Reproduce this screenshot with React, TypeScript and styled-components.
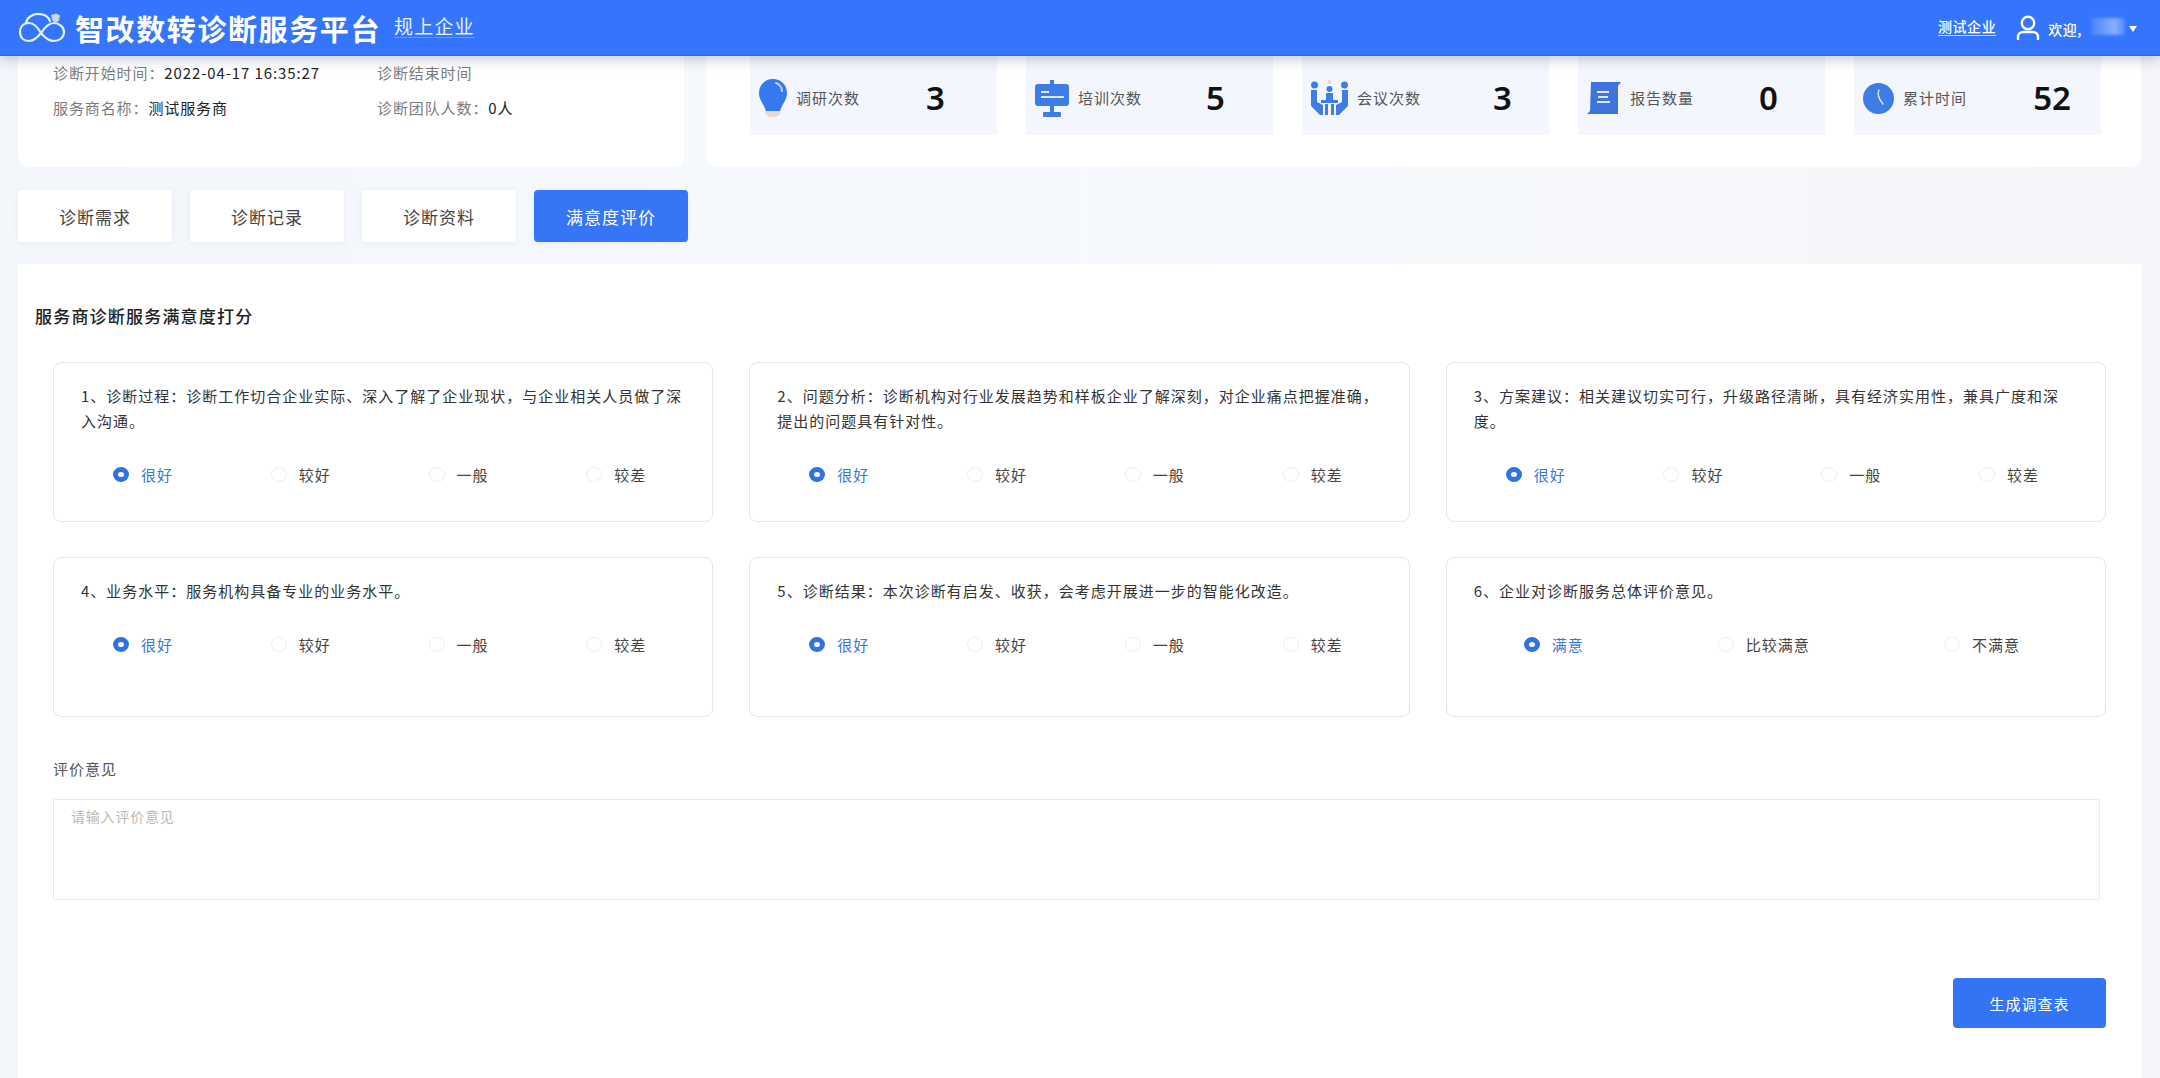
import React from "react";
import styled, { createGlobalStyle } from "styled-components";

const GlobalStyle = createGlobalStyle`
  html, body {
    margin: 0;
    padding: 0;
    background: #f6f9fd;
    font-family: "Noto Sans CJK SC", "Noto Sans", sans-serif;
    color: #333;
  }
  * {
    box-sizing: border-box;
  }
`;

const Page = styled.div`
  width: 2160px;
  height: 1078px;
  overflow: hidden;
  display: flex;
  flex-direction: column;
  background: linear-gradient(90deg, #f3f6fb 0%, #f6f9fd 50%, #f5f6f9 100%);
`;

const Header = styled.header`
  position: relative;
  z-index: 2;
  flex: none;
  height: 56px;
  display: flex;
  align-items: center;
  padding: 0 22px 0 18px;
  background: #3575fb;
  border-bottom: 1px solid #2f66d8;
  box-shadow: 0 3px 12px rgba(40, 50, 70, 0.28);
  color: #fff;
`;

const Brand = styled.h1`
  margin: 0 0 0 9px;
  font-size: 29px;
  line-height: 40px;
  letter-spacing: 1.6px;
  font-weight: 700;
`;

const Scope = styled.span`
  margin: -4px 0 0 13px;
  font-size: 19px;
  letter-spacing: 1.2px;
  color: #e3f0ff;
  text-decoration: underline;
  text-decoration-color: rgba(255, 255, 255, 0.25);
  text-underline-offset: 3px;
`;

const UserArea = styled.div`
  margin-left: auto;
  display: flex;
  align-items: center;
`;

const Company = styled.span`
  margin: -3px 20px 0 0;
  font-size: 14px;
  letter-spacing: 0.6px;
  font-weight: 500;
  text-decoration: underline;
  text-decoration-color: rgba(255, 255, 255, 0.7);
  text-underline-offset: 3px;
`;

const Welcome = styled.span`
  margin: 2px 9px 0 8px;
  font-size: 14px;
  letter-spacing: 0.5px;
  font-weight: 500;
`;

const BlurredName = styled.span`
  width: 34px;
  height: 17px;
  margin-top: -3px;
  background: linear-gradient(90deg, rgba(255, 255, 255, 0.1), rgba(255, 255, 255, 0.42) 70%, rgba(255, 255, 255, 0.14));
  filter: blur(1.5px);
`;

const Caret = styled.span`
  width: 0;
  height: 0;
  margin: 2px 1px 0 4px;
  border-left: 4px solid transparent;
  border-right: 4px solid transparent;
  border-top: 6px solid #fff;
`;

const Content = styled.main`
  flex: 1;
  min-height: 0;
  display: flex;
  flex-direction: column;
  padding: 0 18px;
`;

const TopRow = styled.section`
  flex: none;
  display: grid;
  grid-template-columns: 666px 1435px;
  gap: 22px;
  height: 111px;
`;

const InfoCard = styled.div`
  display: grid;
  grid-template-columns: 324px 1fr;
  grid-auto-rows: 34px;
  row-gap: 1px;
  padding-left: 35px;
  background: #fff;
  border-radius: 0 0 10px 10px;
`;

const InfoItem = styled.div`
  display: flex;
  align-items: center;
  padding-bottom: 2px;
  font-size: 15px;
  letter-spacing: 0.9px;
  color: #7c7c7c;
`;

const InfoValue = styled.span`
  color: #222;
`;

const StatCard = styled.div`
  display: grid;
  grid-template-columns: repeat(5, 1fr);
  gap: 29px;
  height: 111px;
  padding: 0 40px 32px 44px;
  background: #fff;
  border-radius: 0 0 10px 10px;
`;

const StatTile = styled.div`
  display: flex;
  align-items: center;
  gap: 9px;
  padding: 5px 0 0 9px;
  background: #f3f7fd;
`;

const StatIcon = styled.svg`
  flex: none;
  display: block;
`;

const StatLabel = styled.span`
  margin-top: -2px;
  font-size: 15px;
  letter-spacing: 1px;
  color: #555;
  white-space: nowrap;
`;

const StatNumber = styled.span<{ $inset: number }>`
  flex: 1;
  padding-right: ${(p) => p.$inset}px;
  text-align: right;
  font-family: "Noto Sans", sans-serif;
  font-size: 33px;
  line-height: 40px;
  font-weight: 600;
  color: #111;
`;

const Tabs = styled.nav`
  flex: none;
  display: flex;
  gap: 18px;
  margin-top: 23px;
`;

const Tab = styled.div<{ $active?: boolean }>`
  width: 154px;
  height: 52px;
  display: flex;
  align-items: center;
  justify-content: center;
  font-size: 17px;
  letter-spacing: 1px;
  border-radius: ${(p) => (p.$active ? "4px" : "2px")};
  color: ${(p) => (p.$active ? "#fff" : "#444")};
  background: ${(p) => (p.$active ? "#3575f6" : "#fff")};
  box-shadow: 0 1px 5px rgba(120, 140, 180, 0.12);
`;

const Panel = styled.section`
  flex: 1;
  margin-top: 22px;
  padding-top: 39px;
  background: #fff;
`;

const PanelTitle = styled.h2`
  margin: 0;
  padding-left: 17px;
  font-size: 17px;
  line-height: 26px;
  letter-spacing: 1.2px;
  font-weight: 500;
  color: #222;
`;

const PanelBody = styled.div`
  padding: 33px 36px 0 35px;
`;

const QuestionGrid = styled.div`
  display: grid;
  grid-template-columns: repeat(3, 1fr);
  grid-auto-rows: 160px;
  column-gap: 36px;
  row-gap: 35px;
`;

const QuestionCard = styled.div`
  padding: 20px 27px 0;
  border: 1px solid #e4e6ea;
  border-radius: 8px;
  background: #fff;
`;

const QuestionText = styled.p`
  margin: 0;
  font-size: 15px;
  line-height: 25px;
  letter-spacing: 1px;
  color: #333;
`;

const Options = styled.div<{ $left: number; $right: number }>`
  display: flex;
  justify-content: space-between;
  align-items: center;
  height: 24px;
  margin-top: 29px;
  padding: 0 ${(p) => p.$right}px 0 ${(p) => p.$left}px;
`;

const Option = styled.label<{ $checked?: boolean }>`
  display: flex;
  align-items: center;
  gap: 12px;
  font-size: 15px;
  letter-spacing: 1px;
  color: ${(p) => (p.$checked ? "#3a76d6" : "#444")};
`;

const RadioDot = styled.span<{ $checked?: boolean }>`
  width: 16px;
  height: 15px;
  border-radius: 50%;
  background: #fff;
  border: ${(p) => (p.$checked ? "5px solid #2f72e2" : "1px solid #efefef")};
`;

const FieldLabel = styled.div`
  margin-top: 40px;
  font-size: 15px;
  line-height: 24px;
  letter-spacing: 1px;
  color: #555;
`;

const Remark = styled.textarea`
  display: block;
  width: 2047px;
  height: 101px;
  margin-top: 18px;
  padding: 5px 17px;
  border: 1px solid #e8e9ec;
  border-radius: 2px;
  outline: none;
  resize: none;
  font-family: inherit;
  font-size: 14px;
  line-height: 22px;
  letter-spacing: 0.8px;
  background: #fff;

  &::placeholder {
    color: #b9b9b9;
  }
`;

const Actions = styled.div`
  display: flex;
  justify-content: flex-end;
  margin-top: 78px;
`;

const SubmitButton = styled.button`
  width: 153px;
  height: 50px;
  border: none;
  border-radius: 4px;
  background: #3374f5;
  color: #fff;
  font-family: inherit;
  font-size: 15px;
  letter-spacing: 1px;
`;

const Logo = () => (
  <svg width="48" height="30" viewBox="0 0 48 30" fill="none" stroke="#dff3f6" strokeWidth="2.2" strokeLinecap="round">
    <path d="M23 20C19 13 15 10 11 10C5 10 2 14 2 19C2 25 6 28 11 28C15 28 19 25 23 20C27 14 31 10 36 10C41 10 46 14 46 19C46 25 41 28 36 28C31 28 27 25 23 20" />
    <path d="M8 10C9 4 15 1 20 1C26 1 30 3 32 8" />
    <path d="M33 2l5-1.500 4 2-1 5-4 3-3-4z" fill="#c9d8e8" stroke="none" />
  </svg>
);

const UserIcon = () => (
  <svg width="24" height="25" viewBox="0 0 24 25" fill="none" stroke="#fff" strokeWidth="2.4" strokeLinecap="round">
    <circle cx="12" cy="8" r="6.200" />
    <path d="M2 24v-2a5 5 0 0 1 5-5h10a5 5 0 0 1 5 5v2" />
  </svg>
);

const BulbIcon = () => (
  <StatIcon width="28" height="38" viewBox="0 0 28 38">
    <path d="M14 0C6 0 0 6 0 14c0 7 5 11 7 18h14c2-7 7-11 7-18C28 6 22 0 14 0z" fill="#3679ee" />
    <path d="M17 4c3 1 6 4 6 8" fill="none" stroke="#bcd4fb" strokeWidth="2" strokeLinecap="round" />
    <path d="M6 32h16c0 3-3 6-8 6s-8-3-8-6z" fill="#ecd9c4" />
  </StatIcon>
);

const BoardIcon = () => (
  <StatIcon width="34" height="37" viewBox="0 0 34 37">
    <rect x="15" y="0" width="4" height="5" fill="#3f7de6" />
    <rect x="0" y="4" width="34" height="22" rx="3" fill="#3f7de6" />
    <rect x="15" y="26" width="4" height="7" fill="#3f7de6" />
    <rect x="8" y="32" width="18" height="5" rx="1" fill="#3f7de6" />
    <rect x="6" y="11" width="8" height="2" fill="#dfe9fb" />
    <rect x="6" y="16" width="23" height="2" fill="#dfe9fb" />
  </StatIcon>
);

const MeetingIcon = () => (
  <StatIcon width="37" height="36" viewBox="0 0 37 36" fill="#3f7de6">
    <circle cx="18.500" cy="2" r="2" fill="#ecd9c4" />
    <circle cx="3.500" cy="5" r="3.500" />
    <circle cx="33.500" cy="5" r="3.500" />
    <circle cx="18.500" cy="9" r="3" />
    <path d="M0 10h6v12l6 3v10H9L1 27C0 26 0 25 0 24z" />
    <path d="M37 10h-6v12l-6 3v10h3l8-8c1-1 1-2 1-3z" />
    <path d="M15 13h7v7h-7z" />
    <path d="M10 20h17v3H10z" />
    <path d="M14 24h3v11h-3zM20 24h3v11h-3z" />
  </StatIcon>
);

const ScrollIcon = () => (
  <StatIcon width="34" height="34" viewBox="0 0 34 34">
    <path d="M4 1h30l-3 4v28H0l3-3z" fill="#3f74df" />
    <path d="M10 10h12v2H10zM11 15h10v2H11zM10 20h13v2H10z" fill="#dfe9fb" />
  </StatIcon>
);

const ClockIcon = () => (
  <StatIcon width="31" height="31" viewBox="0 0 31 31">
    <circle cx="15.500" cy="15.500" r="15.500" fill="#3f7de6" />
    <path d="M16 7c-2 4-1 8 4 14" fill="none" stroke="#dfe9fb" strokeWidth="1.400" strokeLinecap="round" />
  </StatIcon>
);

const stats = [
  { label: "调研次数", value: "3", inset: 52, icon: <BulbIcon /> },
  { label: "培训次数", value: "5", inset: 48, icon: <BoardIcon /> },
  { label: "会议次数", value: "3", inset: 37, icon: <MeetingIcon /> },
  { label: "报告数量", value: "0", inset: 47, icon: <ScrollIcon /> },
  { label: "累计时间", value: "52", inset: 30, icon: <ClockIcon /> },
];

const tabs = ["诊断需求", "诊断记录", "诊断资料", "满意度评价"];

const grades = ["很好", "较好", "一般", "较差"];

const questions = [
  { text: "1、诊断过程：诊断工作切合企业实际、深入了解了企业现状，与企业相关人员做了深入沟通。", options: grades, left: 32, right: 39 },
  { text: "2、问题分析：诊断机构对行业发展趋势和样板企业了解深刻，对企业痛点把握准确，提出的问题具有针对性。", options: grades, left: 32, right: 39 },
  { text: "3、方案建议：相关建议切实可行，升级路径清晰，具有经济实用性，兼具广度和深度。", options: grades, left: 32, right: 39 },
  { text: "4、业务水平：服务机构具备专业的业务水平。", options: grades, left: 32, right: 39 },
  { text: "5、诊断结果：本次诊断有启发、收获，会考虑开展进一步的智能化改造。", options: grades, left: 32, right: 39 },
  { text: "6、企业对诊断服务总体评价意见。", options: ["满意", "比较满意", "不满意"], left: 50, right: 58 },
];

const App: React.FC = () => {
  return (
    <Page>
      <GlobalStyle />
      <Header>
        <Logo />
        <Brand>智改数转诊断服务平台</Brand>
        <Scope>规上企业</Scope>
        <UserArea>
          <Company>测试企业</Company>
          <UserIcon />
          <Welcome>欢迎,</Welcome>
          <BlurredName />
          <Caret />
        </UserArea>
      </Header>

      <Content>
        <TopRow>
          <InfoCard>
            <InfoItem>
              诊断开始时间：<InfoValue>2022-04-17 16:35:27</InfoValue>
            </InfoItem>
            <InfoItem>诊断结束时间</InfoItem>
            <InfoItem>
              服务商名称：<InfoValue>测试服务商</InfoValue>
            </InfoItem>
            <InfoItem>
              诊断团队人数：<InfoValue>0人</InfoValue>
            </InfoItem>
          </InfoCard>
          <StatCard>
            {stats.map((s) => (
              <StatTile key={s.label}>
                {s.icon}
                <StatLabel>{s.label}</StatLabel>
                <StatNumber $inset={s.inset}>{s.value}</StatNumber>
              </StatTile>
            ))}
          </StatCard>
        </TopRow>

        <Tabs>
          {tabs.map((t, i) => (
            <Tab key={t} $active={i === 3}>
              {t}
            </Tab>
          ))}
        </Tabs>

        <Panel>
          <PanelTitle>服务商诊断服务满意度打分</PanelTitle>
          <PanelBody>
            <QuestionGrid>
              {questions.map((q) => (
                <QuestionCard key={q.text}>
                  <QuestionText>{q.text}</QuestionText>
                  <Options $left={q.left} $right={q.right}>
                    {q.options.map((o, i) => (
                      <Option key={o} $checked={i === 0}>
                        <RadioDot $checked={i === 0} />
                        {o}
                      </Option>
                    ))}
                  </Options>
                </QuestionCard>
              ))}
            </QuestionGrid>
            <FieldLabel>评价意见</FieldLabel>
            <Remark placeholder="请输入评价意见" />
            <Actions>
              <SubmitButton>生成调查表</SubmitButton>
            </Actions>
          </PanelBody>
        </Panel>
      </Content>
    </Page>
  );
};

export default App;
